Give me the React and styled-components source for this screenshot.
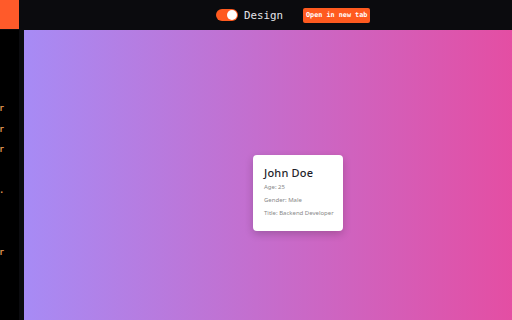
import React from "react";
import styled, { createGlobalStyle } from "styled-components";

const Global = createGlobalStyle`
  html, body { margin: 0; padding: 0; background: #000; }
  #root { width: 512px; height: 320px; overflow: hidden; }
`;

const Shell = styled.div`
  display: flex;
  flex-direction: column;
  width: 512px;
  height: 320px;
  background: #0b0b0e;
`;

const TopBar = styled.div`
  display: flex;
  align-items: flex-start;
  height: 30px;
  flex-shrink: 0;
`;

const Brand = styled.div`
  width: 19px;
  height: 29px;
  background: #ff5a2a;
`;

const Controls = styled.div`
  display: flex;
  align-items: center;
  height: 30px;
  padding-left: 197px;
`;

const Toggle = styled.div`
  position: relative;
  width: 22px;
  height: 12px;
  border-radius: 6px;
  background: #ff5a1f;
  &::after {
    content: "";
    position: absolute;
    right: 1px;
    top: 1px;
    width: 10px;
    height: 10px;
    border-radius: 50%;
    background: #fff;
  }
`;

const Label = styled.span`
  margin-left: 6px;
  font-family: "DejaVu Sans Mono", monospace;
  font-size: 10.8px;
  color: #e4e4e7;
`;

const OpenButton = styled.button`
  margin-left: 20px;
  height: 15px;
  padding: 0 3px;
  border: 0;
  border-radius: 2px;
  background: #ff5a1f;
  color: #fff;
  font-family: "DejaVu Sans Mono", monospace;
  font-weight: bold;
  font-size: 6.8px;
  line-height: 15px;
`;

const Body = styled.div`
  display: flex;
  flex: 1;
`;

const Sidebar = styled.div`
  width: 19px;
  background: #000;
  padding-top: 74px;
  display: flex;
  flex-direction: column;
  margin-right: 5px;
`;

const CodeLine = styled.div`
  display: flex;
  justify-content: flex-end;
  overflow: hidden;
  height: 20.5px;
  white-space: nowrap;
  font-family: "DejaVu Sans Mono", monospace;
  font-size: 8px;
  font-weight: bold;
  color: #e0954f;
  padding-right: 15px;
`;

const Preview = styled.div`
  flex: 1;
  display: flex;
  align-items: center;
  justify-content: flex-start;
  background: linear-gradient(90deg, #a78bf5 0%, #e44ea3 100%);
  padding-left: 229px;
  padding-top: 36px;
`;

const Card = styled.div`
  width: 90px;
  height: 76px;
  box-sizing: border-box;
  padding: 10px 0 0 11px;
  background: #fff;
  border-radius: 4px;
  box-shadow: 0 3px 8px rgba(0, 0, 0, 0.2);
  font-family: "Noto Sans", sans-serif;
`;

const Name = styled.div`
  font-size: 11px;
  font-weight: 500;
  color: #1f1f2b;
  margin-bottom: 1px;
  letter-spacing: 0.2px;
`;

const Field = styled.div`
  font-size: 6px;
  color: #888;
  line-height: 13px;
  white-space: nowrap;
`;

const lines = ["r", "r", "r", "", ".", "", "", "r"];

export default function App() {
  return (
    <Shell>
      <Global />
      <TopBar>
        <Brand />
        <Controls>
          <Toggle />
          <Label>Design</Label>
          <OpenButton>Open in new tab</OpenButton>
        </Controls>
      </TopBar>
      <Body>
        <Sidebar>
          {lines.map((l, i) => (
            <CodeLine key={i}>{l}</CodeLine>
          ))}
        </Sidebar>
        <Preview>
          <Card>
            <Name>John Doe</Name>
            <Field>Age: 25</Field>
            <Field>Gender: Male</Field>
            <Field>Title: Backend Developer</Field>
          </Card>
        </Preview>
      </Body>
    </Shell>
  );
}
